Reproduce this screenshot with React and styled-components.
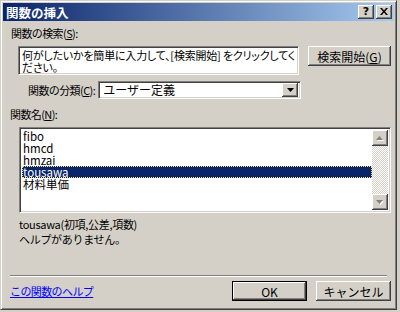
import React from 'react'
import styled, { createGlobalStyle } from 'styled-components'

const GlobalStyle = createGlobalStyle`
  html, body {
    margin: 0;
    padding: 0;
    background: #d4d0c8;
  }
  * { box-sizing: border-box; }
`

const FONT = `"MS UI Gothic", "Noto Sans CJK JP", sans-serif`

const items = ['fibo', 'hmcd', 'hmzai', 'tousawa', '材料単価']

function App() {
  return (
    <>
      <GlobalStyle />
      <Dialog>
        <TitleBar>
          <Title>関数の挿入</Title>
          <TitleButtons>
            <CaptionButton>?</CaptionButton>
            <CaptionButton>
              <svg width="8" height="7" viewBox="0 0 8 7">
                <path d="M0 0h2l2 2.5L6 0h2L5 3.5 8 7H6L4 4.5 2 7H0l3-3.5z" fill="#000" />
              </svg>
            </CaptionButton>
          </TitleButtons>
        </TitleBar>

        <Body>
          <Label $left={8} $top={6}>関数の検索(<u>S</u>):</Label>
          <SearchRow>
            <SearchBox>
              <span>何がしたいかを簡単に入力して、[検索開始] をクリックしてく</span>
              <span>ださい。</span>
            </SearchBox>
            <Button $width={83}>検索開始(<u>G</u>)</Button>
          </SearchRow>

          <CategoryRow>
            <Label>関数の分類(<u>C</u>):</Label>
            <Combo>
              <ComboText>ユーザー定義</ComboText>
              <DropButton>
                <svg width="7" height="4" viewBox="0 0 7 4">
                  <path d="M0 0h7L3.5 4z" fill="#000" />
                </svg>
              </DropButton>
            </Combo>
          </CategoryRow>

          <Label $left={7} $top={9}>関数名(<u>N</u>):</Label>
          <ListBox>
            <Items>
              {items.map((it) => (
                <Item key={it} $selected={it === 'tousawa'}>{it}</Item>
              ))}
            </Items>
            <ScrollBar>
              <ScrollButton>
                <svg width="8" height="5" viewBox="0 0 8 5">
                  <path d="M1 5h7L4.5 1z" fill="#fff" />
                  <path d="M0 4h7L3.5 0z" fill="#808080" />
                </svg>
              </ScrollButton>
              <Track />
              <ScrollButton>
                <svg width="8" height="5" viewBox="0 0 8 5">
                  <path d="M1 1h7L4.5 5z" fill="#fff" />
                  <path d="M0 0h7L3.5 4z" fill="#808080" />
                </svg>
              </ScrollButton>
            </ScrollBar>
          </ListBox>

          <Description>
            <span>tousawa(初項,公差,項数)</span>
            <span>ヘルプがありません。</span>
          </Description>

          <Separator />

          <Footer>
            <HelpLink>この関数のヘルプ</HelpLink>
            <FooterButtons>
              <Button $width={75} $default>OK</Button>
              <Button $width={75}>キャンセル</Button>
            </FooterButtons>
          </Footer>
        </Body>
      </Dialog>
    </>
  )
}

export default App

const Dialog = styled.div`
  width: 397px;
  height: 310px;
  background: #d4d0c8;
  border: 1px solid;
  border-color: #d4d0c8 #404040 #404040 #d4d0c8;
  box-shadow: inset 1px 1px #fff, inset -1px -1px #808080;
  padding: 2px;
  display: flex;
  flex-direction: column;
  font-family: ${FONT};
  font-size: 11px;
  color: #000;
`

const TitleBar = styled.div`
  height: 18px;
  background: linear-gradient(to right, #0a246a, #a6caf0);
  display: flex;
  align-items: center;
  justify-content: space-between;
  padding: 0 2px 0 3px;
`

const Title = styled.div`
  color: #fff;
  font-weight: bold;
  font-size: 12.5px;
`

const TitleButtons = styled.div`
  display: flex;
  gap: 2px;
`

const CaptionButton = styled.div`
  width: 16px;
  height: 14px;
  background: #d4d0c8;
  box-shadow: inset -1px -1px #404040, inset 1px 1px #fff, inset -2px -2px #808080;
  display: flex;
  align-items: center;
  justify-content: center;
  font-family: "DejaVu Sans", sans-serif;
  font-weight: bold;
  font-size: 11px;
  line-height: 1;
  padding-bottom: 1px;
`

const Body = styled.div`
  flex: 1;
  display: flex;
  flex-direction: column;
  padding: 0 3px 0 0;
`

const Label = styled.div`
  margin-left: ${(p) => p.$left || 0}px;
  margin-top: ${(p) => p.$top || 0}px;
  height: 12px;
  line-height: 12px;
  white-space: nowrap;
  letter-spacing: -0.6px;
  u { text-decoration: underline; }
`

const SearchRow = styled.div`
  display: flex;
  align-items: flex-start;
  margin-top: 7px;
  margin-left: 15px;
  gap: 9px;
`

const Sunken = styled.div`
  background: #fff;
  border: 1px solid;
  border-color: #808080 #fff #fff #808080;
  box-shadow: inset 1px 1px #404040, inset -1px -1px #d4d0c8;
`

const SearchBox = styled(Sunken)`
  width: 281px;
  height: 29px;
  padding: 2px 3px;
  display: flex;
  flex-direction: column;
  line-height: 12px;
  white-space: nowrap;
  overflow: hidden;
  font-feature-settings: "palt";
  letter-spacing: -0.2px;
`

const Button = styled.div`
  width: ${(p) => p.$width}px;
  height: 20px;
  background: #d4d0c8;
  display: flex;
  align-items: center;
  justify-content: center;
  white-space: nowrap;
  font-size: 12px;
  box-shadow: ${(p) =>
    p.$default
      ? 'inset 0 0 0 1px #000, inset -2px -2px #404040, inset 2px 2px #fff, inset -3px -3px #808080'
      : 'inset -1px -1px #404040, inset 1px 1px #fff, inset -2px -2px #808080, inset 2px 2px #d4d0c8'};
  u { text-decoration: underline; }
`

const CategoryRow = styled.div`
  display: flex;
  align-items: center;
  margin-top: 6px;
  margin-left: 25px;
  gap: 3px;
`

const Combo = styled(Sunken)`
  width: 203px;
  height: 18px;
  display: flex;
  align-items: center;
  padding: 2px;
`

const ComboText = styled.div`
  flex: 1;
  padding-left: 2px;
  line-height: 12px;
  font-size: 12px;
`

const DropButton = styled.div`
  width: 16px;
  height: 14px;
  background: #d4d0c8;
  box-shadow: inset -1px -1px #404040, inset 1px 1px #fff, inset -2px -2px #808080, inset 2px 2px #d4d0c8;
  display: flex;
  align-items: center;
  justify-content: center;
`

const ListBox = styled(Sunken)`
  margin-top: 7px;
  margin-left: 16px;
  width: 372px;
  height: 86px;
  display: flex;
  padding: 2px;
`

const Items = styled.div`
  flex: 1;
  display: flex;
  flex-direction: column;
`

const Item = styled.div`
  height: 12px;
  line-height: 12px;
  padding-left: 1px;
  font-size: 11.5px;
  color: ${(p) => (p.$selected ? '#fff' : '#000')};
  background: ${(p) => (p.$selected ? '#0a246a' : 'transparent')};
  outline: ${(p) => (p.$selected ? '1px dotted #f5e77a' : 'none')};
  outline-offset: -1px;
`

const ScrollBar = styled.div`
  width: 16px;
  display: flex;
  flex-direction: column;
`

const ScrollButton = styled.div`
  height: 16px;
  background: #d4d0c8;
  box-shadow: inset -1px -1px #404040, inset 1px 1px #fff, inset -2px -2px #808080, inset 2px 2px #d4d0c8;
  display: flex;
  align-items: center;
  justify-content: center;
`

const Track = styled.div`
  flex: 1;
  background: repeating-conic-gradient(#d4d0c8 0 25%, #fff 0 50%) 0 0 / 2px 2px;
`

const Description = styled.div`
  margin-top: 5px;
  margin-left: 16px;
  display: flex;
  flex-direction: column;
  gap: 3px;
  line-height: 12px;
  letter-spacing: -0.3px;
`

const Separator = styled.div`
  margin: auto 4px 0 7px;
  height: 2px;
  border-top: 1px solid #808080;
  border-bottom: 1px solid #fff;
`

const Footer = styled.div`
  display: flex;
  justify-content: space-between;
  align-items: flex-start;
  padding: 4px 0 6px 7px;
`

const HelpLink = styled.a`
  color: #0000ff;
  text-decoration: underline;
  margin-top: 4px;
  line-height: 12px;
  letter-spacing: -0.6px;
  cursor: pointer;
`

const FooterButtons = styled.div`
  display: flex;
  gap: 9px;
`
